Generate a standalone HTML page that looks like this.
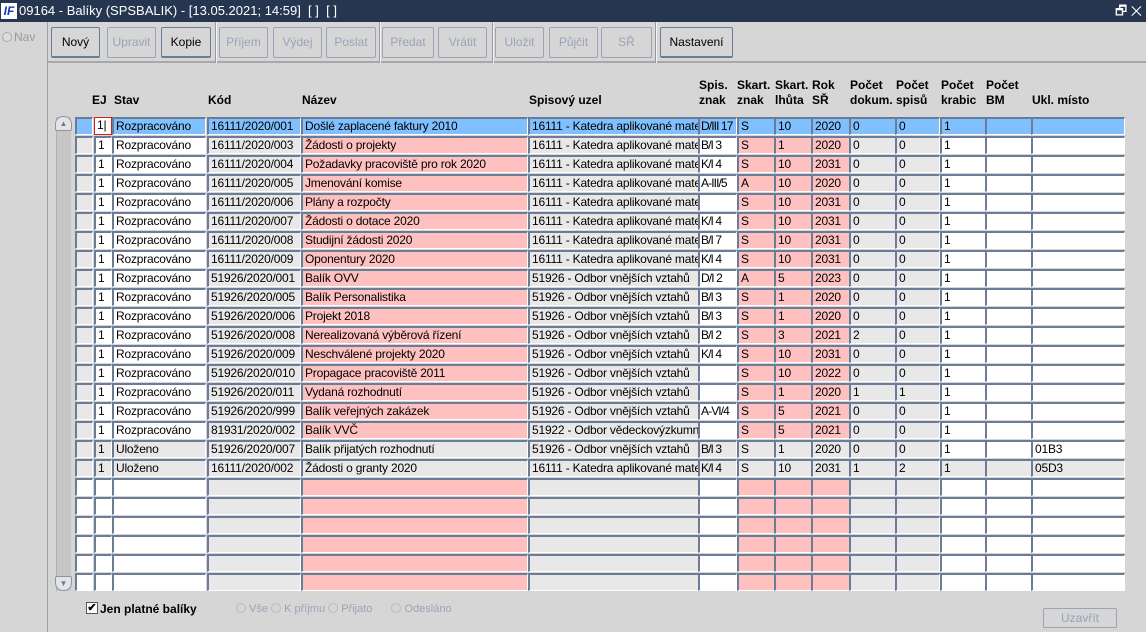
<!DOCTYPE html>
<html><head><meta charset="utf-8"><style>
*{box-sizing:border-box;margin:0;padding:0}
body{width:1146px;height:632px;background:#d6d6d6;font-family:"Liberation Sans",Arial,sans-serif;font-size:12px;color:#000;position:relative;overflow:hidden}
.title{position:absolute;left:0;top:0;width:1146px;height:22px;background:#273650;color:#fff;font-size:13px;line-height:22px}
.title .ic{position:absolute;left:1px;top:3px;width:16px;height:16px;background:#fff;color:#1838b0;font-weight:bold;font-style:italic;font-size:12px;line-height:16px;text-align:center}
.title .t{position:absolute;left:19px;top:0}
.left{position:absolute;left:0;top:22px;width:48px;height:610px;background:#d6d6d6;border-right:1px solid #9aa3b3}
.nav{position:absolute;left:2px;top:8px;color:#999;font-size:12px}
.nav i{display:inline-block;width:10px;height:10px;border-radius:50%;border:1px solid #aaa;background:#ddd;vertical-align:-1px;margin-right:2px}
.tb{position:absolute;left:48px;top:22px;width:1098px;height:41px;border-bottom:2px solid #a8a8a8}
.b{position:absolute;top:5px;height:31px;border:1px solid #9aa3b8;border-radius:2px;background:#d6d6d6;text-align:center;line-height:29px;font-size:12px;color:#9aa3b8}
.b.on{color:#000;border-color:#6b7c99;border-bottom-width:2px}
.sep{position:absolute;top:0;width:2px;height:41px;border-left:1px solid #999;border-right:1px solid #f4f4f4}
.h{position:absolute;font-weight:bold;font-size:12px;line-height:15px}
.r{position:absolute;left:0;height:19px;width:1146px}
.r div{position:absolute;top:0;height:18px;border-top:2px solid #6b7c99;border-left:2px solid #6b7c99;border-bottom:1px solid #fff;border-right:1px solid #fff;padding-left:2px;line-height:15px;white-space:nowrap;overflow:hidden;font-size:12px;letter-spacing:-0.2px}
.c0{left:75px;width:18px}.c1{left:94px;width:18px}.c2{left:112px;width:94px}.c3{left:207px;width:94px}.c4{left:301px;width:227px}.c5{left:528px;width:171px}.c6{left:698px;width:39px}.c7{left:737px;width:38px}.c8{left:774px;width:38px}.c9{left:811px;width:39px}.c10{left:849px;width:47px}.c11{left:895px;width:45px}.c12{left:940px;width:46px}.c13{left:985px;width:47px}.c14{left:1031px;width:94px}
.g{background:#e8e8e8}.p{background:#ffc0c0}.w{background:#fff}.s{background:#80c0ff}
.r .sm{font-size:12px;letter-spacing:-0.9px;padding-left:1px}
.sb{position:absolute;left:56px;top:117px;width:15px;height:474px;background:#c6c6c6;border-left:1px solid #b0b0b0}
.ab{position:absolute;left:55px;width:17px;height:15px;border:1px solid #8a94a8;border-radius:8px 8px 2px 2px;background:#e4e4e4;font-size:8px;text-align:center;line-height:13px;color:#6b7c99}
</style></head><body>
<div class="title"><span class="ic">IF</span><span class="t">09164 - Balíky (SPSBALIK) - [13.05.2021; 14:59]&nbsp; [ ]&nbsp; [ ]</span><span style="position:absolute;right:4px;top:0;font-size:13px">🗗 ✕</span></div>
<div class="left"><div class="nav"><i></i>Nav</div></div>
<div class="tb">
<div class="b on" style="left:3px;width:49px">Nový</div>
<div class="b" style="left:59px;width:49px">Upravit</div>
<div class="b on" style="left:113px;width:50px">Kopie</div>
<div class="sep" style="left:167px"></div>
<div class="b" style="left:171px;width:49px">Příjem</div>
<div class="b" style="left:225px;width:49px">Výdej</div>
<div class="b" style="left:278px;width:50px">Poslat</div>
<div class="sep" style="left:331px"></div>
<div class="b" style="left:334px;width:52px">Předat</div>
<div class="b" style="left:390px;width:49px">Vrátit</div>
<div class="sep" style="left:444px"></div>
<div class="b" style="left:447px;width:49px">Uložit</div>
<div class="b" style="left:501px;width:49px">Půjčit</div>
<div class="b" style="left:553px;width:51px">SŘ</div>
<div class="sep" style="left:607px"></div>
<div class="b on" style="left:612px;width:73px">Nastavení</div>
</div>
<div class="h" style="left:92px;top:93px">EJ</div>
<div class="h" style="left:114px;top:93px">Stav</div>
<div class="h" style="left:208px;top:93px">Kód</div>
<div class="h" style="left:302px;top:93px">Název</div>
<div class="h" style="left:529px;top:93px">Spisový uzel</div>
<div class="h" style="left:699px;top:78px">Spis.<br>znak</div>
<div class="h" style="left:737px;top:78px">Skart.<br>znak</div>
<div class="h" style="left:775px;top:78px">Skart.<br>lhůta</div>
<div class="h" style="left:812px;top:78px">Rok<br>SŘ</div>
<div class="h" style="left:850px;top:78px">Počet<br>dokum.</div>
<div class="h" style="left:896px;top:78px">Počet<br>spisů</div>
<div class="h" style="left:941px;top:78px">Počet<br>krabic</div>
<div class="h" style="left:986px;top:78px">Počet<br>BM</div>
<div class="h" style="left:1032px;top:93px">Ukl. místo</div>
<div class="sb"></div>
<div class="ab" style="top:116px">▲</div>
<div class="ab" style="top:576px;border-radius:2px 2px 8px 8px">▼</div>

<div class="r" style="top:117px"><div class="c0 s"></div><div class="c1 w" style="border:1px solid #d02020">1|</div><div class="c2 s">Rozpracováno</div><div class="c3 s">16111/2020/001</div><div class="c4 s">Došlé zaplacené faktury 2010</div><div class="c5 s">16111 - Katedra aplikované matematiky</div><div class="c6 s sm">D/III 17</div><div class="c7 s">S</div><div class="c8 s">10</div><div class="c9 s">2020</div><div class="c10 s">0</div><div class="c11 s">0</div><div class="c12 s">1</div><div class="c13 s"></div><div class="c14 s"></div></div>
<div class="r" style="top:136px"><div class="c0 g"></div><div class="c1 w">1</div><div class="c2 w">Rozpracováno</div><div class="c3 g">16111/2020/003</div><div class="c4 p">Žádosti o projekty</div><div class="c5 g">16111 - Katedra aplikované matematiky</div><div class="c6 w sm">B/I 3</div><div class="c7 p">S</div><div class="c8 p">1</div><div class="c9 p">2020</div><div class="c10 g">0</div><div class="c11 g">0</div><div class="c12 w">1</div><div class="c13 w"></div><div class="c14 w"></div></div>
<div class="r" style="top:155px"><div class="c0 g"></div><div class="c1 w">1</div><div class="c2 w">Rozpracováno</div><div class="c3 g">16111/2020/004</div><div class="c4 p">Požadavky pracoviště pro rok 2020</div><div class="c5 g">16111 - Katedra aplikované matematiky</div><div class="c6 w sm">K/I 4</div><div class="c7 p">S</div><div class="c8 p">10</div><div class="c9 p">2031</div><div class="c10 g">0</div><div class="c11 g">0</div><div class="c12 w">1</div><div class="c13 w"></div><div class="c14 w"></div></div>
<div class="r" style="top:174px"><div class="c0 g"></div><div class="c1 w">1</div><div class="c2 w">Rozpracováno</div><div class="c3 g">16111/2020/005</div><div class="c4 p">Jmenování komise</div><div class="c5 g">16111 - Katedra aplikované matematiky</div><div class="c6 w sm">A-III/5</div><div class="c7 p">A</div><div class="c8 p">10</div><div class="c9 p">2020</div><div class="c10 g">0</div><div class="c11 g">0</div><div class="c12 w">1</div><div class="c13 w"></div><div class="c14 w"></div></div>
<div class="r" style="top:193px"><div class="c0 g"></div><div class="c1 w">1</div><div class="c2 w">Rozpracováno</div><div class="c3 g">16111/2020/006</div><div class="c4 p">Plány a rozpočty</div><div class="c5 g">16111 - Katedra aplikované matematiky</div><div class="c6 w sm"></div><div class="c7 p">S</div><div class="c8 p">10</div><div class="c9 p">2031</div><div class="c10 g">0</div><div class="c11 g">0</div><div class="c12 w">1</div><div class="c13 w"></div><div class="c14 w"></div></div>
<div class="r" style="top:212px"><div class="c0 g"></div><div class="c1 w">1</div><div class="c2 w">Rozpracováno</div><div class="c3 g">16111/2020/007</div><div class="c4 p">Žádosti o dotace 2020</div><div class="c5 g">16111 - Katedra aplikované matematiky</div><div class="c6 w sm">K/I 4</div><div class="c7 p">S</div><div class="c8 p">10</div><div class="c9 p">2031</div><div class="c10 g">0</div><div class="c11 g">0</div><div class="c12 w">1</div><div class="c13 w"></div><div class="c14 w"></div></div>
<div class="r" style="top:231px"><div class="c0 g"></div><div class="c1 w">1</div><div class="c2 w">Rozpracováno</div><div class="c3 g">16111/2020/008</div><div class="c4 p">Studijní žádosti 2020</div><div class="c5 g">16111 - Katedra aplikované matematiky</div><div class="c6 w sm">B/I 7</div><div class="c7 p">S</div><div class="c8 p">10</div><div class="c9 p">2031</div><div class="c10 g">0</div><div class="c11 g">0</div><div class="c12 w">1</div><div class="c13 w"></div><div class="c14 w"></div></div>
<div class="r" style="top:250px"><div class="c0 g"></div><div class="c1 w">1</div><div class="c2 w">Rozpracováno</div><div class="c3 g">16111/2020/009</div><div class="c4 p">Oponentury 2020</div><div class="c5 g">16111 - Katedra aplikované matematiky</div><div class="c6 w sm">K/I 4</div><div class="c7 p">S</div><div class="c8 p">10</div><div class="c9 p">2031</div><div class="c10 g">0</div><div class="c11 g">0</div><div class="c12 w">1</div><div class="c13 w"></div><div class="c14 w"></div></div>
<div class="r" style="top:269px"><div class="c0 g"></div><div class="c1 w">1</div><div class="c2 w">Rozpracováno</div><div class="c3 g">51926/2020/001</div><div class="c4 p">Balík OVV</div><div class="c5 g">51926 - Odbor vnějších vztahů</div><div class="c6 w sm">D/I 2</div><div class="c7 p">A</div><div class="c8 p">5</div><div class="c9 p">2023</div><div class="c10 g">0</div><div class="c11 g">0</div><div class="c12 w">1</div><div class="c13 w"></div><div class="c14 w"></div></div>
<div class="r" style="top:288px"><div class="c0 g"></div><div class="c1 w">1</div><div class="c2 w">Rozpracováno</div><div class="c3 g">51926/2020/005</div><div class="c4 p">Balík Personalistika</div><div class="c5 g">51926 - Odbor vnějších vztahů</div><div class="c6 w sm">B/I 3</div><div class="c7 p">S</div><div class="c8 p">1</div><div class="c9 p">2020</div><div class="c10 g">0</div><div class="c11 g">0</div><div class="c12 w">1</div><div class="c13 w"></div><div class="c14 w"></div></div>
<div class="r" style="top:307px"><div class="c0 g"></div><div class="c1 w">1</div><div class="c2 w">Rozpracováno</div><div class="c3 g">51926/2020/006</div><div class="c4 p">Projekt 2018</div><div class="c5 g">51926 - Odbor vnějších vztahů</div><div class="c6 w sm">B/I 3</div><div class="c7 p">S</div><div class="c8 p">1</div><div class="c9 p">2020</div><div class="c10 g">0</div><div class="c11 g">0</div><div class="c12 w">1</div><div class="c13 w"></div><div class="c14 w"></div></div>
<div class="r" style="top:326px"><div class="c0 g"></div><div class="c1 w">1</div><div class="c2 w">Rozpracováno</div><div class="c3 g">51926/2020/008</div><div class="c4 p">Nerealizovaná výběrová řízení</div><div class="c5 g">51926 - Odbor vnějších vztahů</div><div class="c6 w sm">B/I 2</div><div class="c7 p">S</div><div class="c8 p">3</div><div class="c9 p">2021</div><div class="c10 g">2</div><div class="c11 g">0</div><div class="c12 w">1</div><div class="c13 w"></div><div class="c14 w"></div></div>
<div class="r" style="top:345px"><div class="c0 g"></div><div class="c1 w">1</div><div class="c2 w">Rozpracováno</div><div class="c3 g">51926/2020/009</div><div class="c4 p">Neschválené projekty 2020</div><div class="c5 g">51926 - Odbor vnějších vztahů</div><div class="c6 w sm">K/I 4</div><div class="c7 p">S</div><div class="c8 p">10</div><div class="c9 p">2031</div><div class="c10 g">0</div><div class="c11 g">0</div><div class="c12 w">1</div><div class="c13 w"></div><div class="c14 w"></div></div>
<div class="r" style="top:364px"><div class="c0 g"></div><div class="c1 w">1</div><div class="c2 w">Rozpracováno</div><div class="c3 g">51926/2020/010</div><div class="c4 p">Propagace pracoviště 2011</div><div class="c5 g">51926 - Odbor vnějších vztahů</div><div class="c6 w sm"></div><div class="c7 p">S</div><div class="c8 p">10</div><div class="c9 p">2022</div><div class="c10 g">0</div><div class="c11 g">0</div><div class="c12 w">1</div><div class="c13 w"></div><div class="c14 w"></div></div>
<div class="r" style="top:383px"><div class="c0 g"></div><div class="c1 w">1</div><div class="c2 w">Rozpracováno</div><div class="c3 g">51926/2020/011</div><div class="c4 p">Vydaná rozhodnutí</div><div class="c5 g">51926 - Odbor vnějších vztahů</div><div class="c6 w sm"></div><div class="c7 p">S</div><div class="c8 p">1</div><div class="c9 p">2020</div><div class="c10 g">1</div><div class="c11 g">1</div><div class="c12 w">1</div><div class="c13 w"></div><div class="c14 w"></div></div>
<div class="r" style="top:402px"><div class="c0 g"></div><div class="c1 w">1</div><div class="c2 w">Rozpracováno</div><div class="c3 g">51926/2020/999</div><div class="c4 p">Balík veřejných zakázek</div><div class="c5 g">51926 - Odbor vnějších vztahů</div><div class="c6 w sm">A-VI/4</div><div class="c7 p">S</div><div class="c8 p">5</div><div class="c9 p">2021</div><div class="c10 g">0</div><div class="c11 g">0</div><div class="c12 w">1</div><div class="c13 w"></div><div class="c14 w"></div></div>
<div class="r" style="top:421px"><div class="c0 g"></div><div class="c1 w">1</div><div class="c2 w">Rozpracováno</div><div class="c3 g">81931/2020/002</div><div class="c4 p">Balík VVČ</div><div class="c5 g">51922 - Odbor vědeckovýzkumné</div><div class="c6 w sm"></div><div class="c7 p">S</div><div class="c8 p">5</div><div class="c9 p">2021</div><div class="c10 g">0</div><div class="c11 g">0</div><div class="c12 w">1</div><div class="c13 w"></div><div class="c14 w"></div></div>
<div class="r" style="top:440px"><div class="c0 g"></div><div class="c1 g">1</div><div class="c2 g">Uloženo</div><div class="c3 g">51926/2020/007</div><div class="c4 g">Balík přijatých rozhodnutí</div><div class="c5 g">51926 - Odbor vnějších vztahů</div><div class="c6 g sm">B/I 3</div><div class="c7 g">S</div><div class="c8 g">1</div><div class="c9 g">2020</div><div class="c10 g">0</div><div class="c11 g">0</div><div class="c12 w">1</div><div class="c13 w"></div><div class="c14 w">01B3</div></div>
<div class="r" style="top:459px"><div class="c0 g"></div><div class="c1 g">1</div><div class="c2 g">Uloženo</div><div class="c3 g">16111/2020/002</div><div class="c4 g">Žádosti o granty 2020</div><div class="c5 g">16111 - Katedra aplikované matematiky</div><div class="c6 g sm">K/I 4</div><div class="c7 g">S</div><div class="c8 g">10</div><div class="c9 g">2031</div><div class="c10 g">1</div><div class="c11 g">2</div><div class="c12 g">1</div><div class="c13 g"></div><div class="c14 g">05D3</div></div>
<div class="r" style="top:478px"><div class="c0 w"></div><div class="c1 w"></div><div class="c2 w"></div><div class="c3 g"></div><div class="c4 p"></div><div class="c5 g"></div><div class="c6 w"></div><div class="c7 p"></div><div class="c8 p"></div><div class="c9 p"></div><div class="c10 g"></div><div class="c11 g"></div><div class="c12 w"></div><div class="c13 w"></div><div class="c14 w"></div></div>
<div class="r" style="top:497px"><div class="c0 w"></div><div class="c1 w"></div><div class="c2 w"></div><div class="c3 g"></div><div class="c4 p"></div><div class="c5 g"></div><div class="c6 w"></div><div class="c7 p"></div><div class="c8 p"></div><div class="c9 p"></div><div class="c10 g"></div><div class="c11 g"></div><div class="c12 w"></div><div class="c13 w"></div><div class="c14 w"></div></div>
<div class="r" style="top:516px"><div class="c0 w"></div><div class="c1 w"></div><div class="c2 w"></div><div class="c3 g"></div><div class="c4 p"></div><div class="c5 g"></div><div class="c6 w"></div><div class="c7 p"></div><div class="c8 p"></div><div class="c9 p"></div><div class="c10 g"></div><div class="c11 g"></div><div class="c12 w"></div><div class="c13 w"></div><div class="c14 w"></div></div>
<div class="r" style="top:535px"><div class="c0 w"></div><div class="c1 w"></div><div class="c2 w"></div><div class="c3 g"></div><div class="c4 p"></div><div class="c5 g"></div><div class="c6 w"></div><div class="c7 p"></div><div class="c8 p"></div><div class="c9 p"></div><div class="c10 g"></div><div class="c11 g"></div><div class="c12 w"></div><div class="c13 w"></div><div class="c14 w"></div></div>
<div class="r" style="top:554px"><div class="c0 w"></div><div class="c1 w"></div><div class="c2 w"></div><div class="c3 g"></div><div class="c4 p"></div><div class="c5 g"></div><div class="c6 w"></div><div class="c7 p"></div><div class="c8 p"></div><div class="c9 p"></div><div class="c10 g"></div><div class="c11 g"></div><div class="c12 w"></div><div class="c13 w"></div><div class="c14 w"></div></div>
<div class="r" style="top:573px"><div class="c0 w"></div><div class="c1 w"></div><div class="c2 w"></div><div class="c3 g"></div><div class="c4 p"></div><div class="c5 g"></div><div class="c6 w"></div><div class="c7 p"></div><div class="c8 p"></div><div class="c9 p"></div><div class="c10 g"></div><div class="c11 g"></div><div class="c12 w"></div><div class="c13 w"></div><div class="c14 w"></div></div>

<div style="position:absolute;left:86px;top:602px;width:12px;height:12px;border:1px solid #555;background:#fff;font-size:11px;line-height:10px;text-align:center;font-weight:bold">✔</div>
<div style="position:absolute;left:100px;top:602px;font-weight:bold;font-size:12px">Jen platné balíky</div>
<div style="position:absolute;left:236px;top:603px;color:#9aa3b8;font-size:11px;white-space:nowrap">
<span style="display:inline-block;width:10px;height:10px;border:1px solid #bbb;border-radius:50%;vertical-align:-1px"></span> Vše
<span style="display:inline-block;width:10px;height:10px;border:1px solid #bbb;border-radius:50%;vertical-align:-1px"></span> K příjmu
<span style="display:inline-block;width:10px;height:10px;border:1px solid #bbb;border-radius:50%;vertical-align:-1px"></span> Přijato
<span style="display:inline-block;width:10px;height:10px;border:1px solid #bbb;border-radius:50%;vertical-align:-1px;margin-left:16px"></span> Odesláno</div>
<div style="position:absolute;left:1043px;top:608px;width:74px;height:20px;border:1px solid #9aa3b8;border-radius:2px;text-align:center;line-height:18px;color:#9aa3b8;font-size:12px">Uzavřít</div>
</body></html>
